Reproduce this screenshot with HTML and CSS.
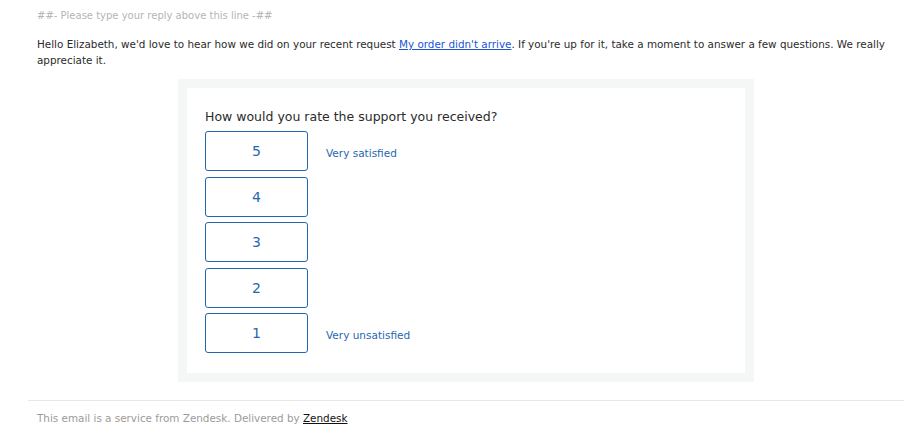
FILE: index.html
```html
<!DOCTYPE html>
<html lang="en">

<head>
    <meta charset="UTF-8">
    <meta name="viewport" content="width=device-width, initial-scale=1.0">
    <title>Rate your support</title>
    <link rel="stylesheet" href="styles.css">
</head>

<body>
    <div class="mail">
        <!-- Reply marker -->
        <p class="delimiter">##- Please type your reply above this line -##</p>

        <p class="intro">
            Hello Elizabeth, we'd love to hear how we did on your recent request <a href="#">My order didn't arrive</a>. If you're up for it, take a moment to answer a few questions. We really appreciate it.
        </p>

        <!-- Survey card -->
        <div class="survey-frame">
            <div class="survey">
                <p class="question">How would you rate the support you received?</p>
                <div class="rating-row">
                    <a href="#" class="rating-btn">5</a>
                    <span class="rating-label">Very satisfied</span>
                </div>
                <div class="rating-row">
                    <a href="#" class="rating-btn">4</a>
                </div>
                <div class="rating-row">
                    <a href="#" class="rating-btn">3</a>
                </div>
                <div class="rating-row">
                    <a href="#" class="rating-btn">2</a>
                </div>
                <div class="rating-row">
                    <a href="#" class="rating-btn">1</a>
                    <span class="rating-label">Very unsatisfied</span>
                </div>
            </div>
        </div>

        <footer>
            <p>This email is a service from Zendesk. Delivered by <a href="#">Zendesk</a></p>
        </footer>
    </div>
</body>

</html>
```

FILE: styles.css
```css
body {
    margin: 0;
    padding: 0;
    background-color: #fff;
    font-family: 'DejaVu Sans', 'Noto Sans', sans-serif;
    color: #2f3941;
}

.mail {
    padding: 0 10px 0 28px;
}

.delimiter {
    margin: 0;
    padding: 9px 9px 0;
    font-size: 10px;
    line-height: 14px;
    color: #b5b5b5;
}

.intro {
    margin: 13px 0 0;
    padding: 0 9px;
    font-size: 10.4px;
    line-height: 16px;
    color: #2b2b2b;
}
.intro a {
    color: #1a55d6;
    text-decoration: underline;
}

/* Survey card */
.survey-frame {
    width: 558px;
    margin: 11px 0 0 150px;
    padding: 9px;
    background-color: #f5f7f6;
}
.survey {
    background-color: #fff;
    padding: 21px 18px 20px;
}
.question {
    margin: 0 0 6px;
    font-size: 12.5px;
    line-height: 16px;
    color: #2b2b2b;
}
.rating-row {
    display: flex;
    align-items: center;
    margin-bottom: 5.5px;
}
.rating-row:last-child {
    margin-bottom: 0;
}
.rating-btn {
    box-sizing: border-box;
    width: 103px;
    height: 40px;
    display: flex;
    justify-content: center;
    align-items: center;
    border: 1px solid #1f68b0;
    border-radius: 3px;
    color: #1f68b0;
    font-size: 14px;
    text-decoration: none;
}
.rating-label {
    margin-left: 18px;
    padding-top: 3px;
    font-size: 10.5px;
    color: #1f68b0;
}

footer {
    margin-top: 18px;
    border-top: 1px solid #e8e8e8;
    padding: 10px 9px;
}
footer p {
    margin: 0;
    font-size: 10.4px;
    line-height: 14px;
    color: #9b9b9b;
}
footer a {
    color: #111;
    text-decoration: underline;
}
```
